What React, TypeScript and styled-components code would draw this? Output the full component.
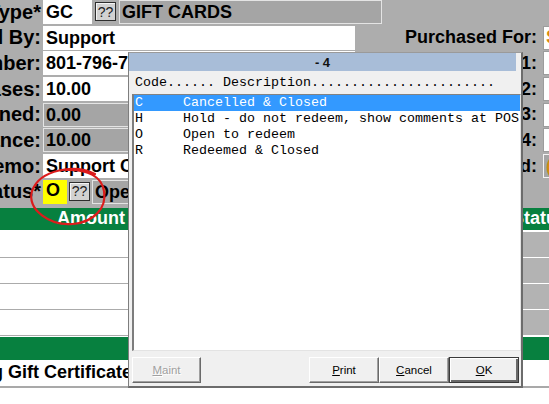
import React from "react";
import styled, { createGlobalStyle } from "styled-components";

const GlobalStyle = createGlobalStyle`
  html, body {
    margin: 0;
    padding: 0;
    background: #fff;
    overflow: hidden;
  }
  body {
    font-family: "Liberation Sans", Arial, sans-serif;
  }
`;

const Screen = styled.div`
  position: relative;
  width: 549px;
  height: 404px;
  overflow: hidden;
  background: #fff;
`;

const Form = styled.div`
  width: 620px;
  background: #adadad;
  display: grid;
  grid-template-columns: 41px 341px 161px 77px;
  grid-auto-rows: 24px;
  row-gap: 1.7px;
  padding-bottom: 4px;
`;

const Label = styled.div`
  display: flex;
  justify-content: flex-end;
  align-items: center;
  white-space: nowrap;
  font-weight: bold;
  font-size: 20px;
  color: #000;
`;

const SideLabel = styled(Label)`
  font-size: 18px;
  padding-right: 6px;
`;

const Cell = styled.div<{ $gap?: number }>`
  display: flex;
  gap: ${(p) => p.$gap ?? 3}px;
  padding-left: 2px;
  min-width: 0;
`;

type Tone = "white" | "gray" | "yellow";

const toneBg: Record<Tone, string> = {
  white: "#ffffff",
  gray: "#a5a5a5",
  yellow: "#ffff00",
};

const Field = styled.div<{ $w: number; $tone?: Tone; $top?: boolean }>`
  width: ${(p) => p.$w}px;
  flex: none;
  box-sizing: border-box;
  background: ${(p) => toneBg[p.$tone ?? "white"]};
  border: 1px solid ${(p) => (p.$tone === "gray" ? "#e4e4e4" : toneBg[p.$tone ?? "white"])};
  padding-left: 2px;
  display: flex;
  align-items: ${(p) => (p.$top ? "flex-start" : "center")};
  line-height: 18px;
  font-weight: bold;
  font-size: 18px;
  color: #000;
  white-space: nowrap;
  overflow: hidden;
`;

const SideField = styled.div<{ $tone?: Tone }>`
  box-sizing: border-box;
  height: 24px;
  background: ${(p) => toneBg[p.$tone ?? "white"]};
  border: 1px solid ${(p) => (p.$tone === "gray" ? "#f4f4f4" : "#9c9c9c")};
  padding-left: 2px;
  display: flex;
  align-items: center;
  font-weight: bold;
  font-size: 18px;
  color: #d68a10;
  overflow: hidden;
`;

const Lookup = styled.div`
  flex: none;
  width: 21px;
  height: 19px;
  margin-top: 2px;
  box-sizing: border-box;
  background: #d2d2d2;
  border: 1px solid #2e2e2e;
  box-shadow: inset 1px 1px 0 #f4f4f4;
  display: flex;
  align-items: center;
  justify-content: center;
  font-size: 14px;
  color: #202020;
`;

const Empty = styled.div``;

const Table = styled.div`
  width: 620px;
  display: grid;
  grid-template-columns: 127px 385px 1fr;
`;

const HeadCell = styled.div<{ $right?: boolean }>`
  height: 22px;
  margin-bottom: 2px;
  background: #07803f;
  color: #fff;
  font-weight: bold;
  font-size: 18px;
  display: flex;
  align-items: center;
  justify-content: ${(p) => (p.$right ? "flex-end" : "flex-start")};
  padding-right: ${(p) => (p.$right ? 2 : 0)}px;
  white-space: nowrap;
`;

const DataCell = styled.div<{ $status?: boolean }>`
  height: 25px;
  background: ${(p) => (p.$status ? "#b3b3b3" : "#fff")};
  border-bottom: 1px solid ${(p) => (p.$status ? "#fff" : "#ababab")};
`;

const TotalsBar = styled.div`
  grid-column: 1 / -1;
  height: 23px;
  margin-top: 1px;
  background: #07803f;
`;

const TotalsRow = styled.div`
  grid-column: 1 / -1;
  height: 26px;
  border-bottom: 2px solid #a9a9a9;
  display: flex;
  align-items: center;
  font-weight: bold;
  font-size: 18px;
  color: #000;
  white-space: nowrap;
  span {
    margin-left: -103px;
  }
`;

const Dialog = styled.div`
  position: absolute;
  left: 128px;
  top: 52px;
  width: 395px;
  height: 336px;
  box-sizing: border-box;
  background: #f0f0f0;
  border-style: solid;
  border-width: 1px 2px 2px 1px;
  border-color: #9a9a9a #6c6c6c #6c6c6c #7e7e7e;
  display: flex;
  flex-direction: column;
`;

const TitleBar = styled.div`
  height: 18px;
  margin-right: 5px;
  background: #a8bdd8;
  display: flex;
  align-items: center;
  justify-content: center;
  font-weight: bold;
  font-size: 13px;
  color: #111;
  white-space: pre;
`;

const ColumnHead = styled.div`
  height: 23px;
  padding-left: 6px;
  display: flex;
  align-items: center;
  font-family: "Liberation Mono", "Courier New", monospace;
  font-size: 13.33px;
  color: #000;
  white-space: pre;
`;

const ListBox = styled.div`
  height: 257px;
  margin-left: 3px;
  box-sizing: border-box;
  background: #fff;
  border-style: solid;
  border-width: 1px 1px 1px 2px;
  border-color: #828282 #e3e3e3 #e3e3e3 #7d7d7d;
`;

const Item = styled.div<{ $selected?: boolean }>`
  height: 16px;
  line-height: 16px;
  padding-left: 1px;
  font-family: "Liberation Mono", "Courier New", monospace;
  font-size: 13.33px;
  white-space: pre;
  background: ${(p) => (p.$selected ? "#3399ff" : "transparent")};
  color: ${(p) => (p.$selected ? "#fff" : "#000")};
`;

const ButtonRow = styled.div`
  display: flex;
  padding: 6px 2px 0 3px;
`;

const Spacer = styled.div`
  flex: 1;
`;

const DlgButton = styled.div<{ $w?: number; $default?: boolean; $disabled?: boolean }>`
  width: ${(p) => p.$w ?? 70}px;
  height: 26px;
  box-sizing: border-box;
  background: #f0f0f0;
  border: 1px solid;
  border-color: ${(p) => (p.$default ? "#3a3a3a" : "#fff #6a6a6a #6a6a6a #fff")};
  box-shadow: ${(p) =>
    p.$default
      ? "inset 1px 1px 0 #fff, inset -2px -2px 0 #6a6a6a"
      : "inset -1px -1px 0 #a0a0a0"};
  display: flex;
  align-items: center;
  justify-content: center;
  font-size: 11.5px;
  color: ${(p) => (p.$disabled ? "#a0a0a0" : "#000")};
  text-shadow: ${(p) => (p.$disabled ? "1px 1px 0 #fff" : "none")};
`;

const Mark = styled.svg`
  position: absolute;
  left: 0;
  top: 160px;
  pointer-events: none;
`;

const items = [
  ["C", "Cancelled & Closed"],
  ["H", "Hold - do not redeem, show comments at POS"],
  ["O", "Open to redeem"],
  ["R", "Redeemed & Closed"],
];

const App = () => {
  return (
    <Screen>
      <GlobalStyle />
      <Form>
        <Label>Card Type*</Label>
        <Cell>
          <Field $w={49}>GC</Field>
          <Lookup>??</Lookup>
          <Field $w={263} $tone="gray">GIFT CARDS</Field>
        </Cell>
        <Empty />
        <Empty />

        <Label>Sell By:</Label>
        <Cell>
          <Field $w={312}>Support</Field>
        </Cell>
        <SideLabel>Purchased For:</SideLabel>
        <SideField>S</SideField>

        <Label>Card Number:</Label>
        <Cell>
          <Field $w={312}>801-796-7000</Field>
        </Cell>
        <SideLabel>Address 1:</SideLabel>
        <SideField />

        <Label>Purchases:</Label>
        <Cell>
          <Field $w={120}>10.00</Field>
        </Cell>
        <SideLabel>Address 2:</SideLabel>
        <SideField />

        <Label>Returned:</Label>
        <Cell>
          <Field $w={120} $tone="gray">0.00</Field>
        </Cell>
        <SideLabel>Address 3:</SideLabel>
        <SideField />

        <Label>Balance:</Label>
        <Cell>
          <Field $w={120} $tone="gray">10.00</Field>
        </Cell>
        <SideLabel>Address 4:</SideLabel>
        <SideField />

        <Label>Memo:</Label>
        <Cell>
          <Field $w={312}>Support Card Sale</Field>
        </Cell>
        <SideLabel>Emailed:</SideLabel>
        <SideField $tone="gray">(</SideField>

        <Label>Status*</Label>
        <Cell $gap={2}>
          <Field $w={24} $tone="yellow" $top>O</Field>
          <Lookup>??</Lookup>
          <Field $w={220} $tone="gray">Open</Field>
        </Cell>
        <Empty />
        <Empty />
      </Form>

      <Table>
        <HeadCell $right>Amount</HeadCell>
        <HeadCell />
        <HeadCell>Status</HeadCell>
        {[0, 1, 2, 3].map((i) => (
          <React.Fragment key={i}>
            <DataCell />
            <DataCell />
            <DataCell $status />
          </React.Fragment>
        ))}
        <TotalsBar />
        <TotalsRow>
          <span>Outstanding Gift Certificates</span>
        </TotalsRow>
      </Table>

      <Mark width="120" height="80" viewBox="0 0 120 80">
        <path
          d="M 95 14 C 75 4, 40 9, 32 31 C 27 50, 50 66, 73 64 C 94 62, 107 48, 104 31 C 102 17, 88 9, 66 10"
          fill="none"
          stroke="#dc1c1c"
          strokeWidth="2.2"
          strokeLinecap="round"
        />
      </Mark>

      <Dialog>
        <TitleBar>- 4</TitleBar>
        <ColumnHead>Code...... Description.......................</ColumnHead>
        <ListBox>
          {items.map(([code, desc], i) => (
            <Item key={code} $selected={i === 0}>
              {code + "     " + desc}
            </Item>
          ))}
        </ListBox>
        <ButtonRow>
          <DlgButton $w={69} $disabled>
            <span>
              <u>M</u>aint
            </span>
          </DlgButton>
          <Spacer />
          <DlgButton>
            <span>
              <u>P</u>rint
            </span>
          </DlgButton>
          <DlgButton>
            <span>
              <u>C</u>ancel
            </span>
          </DlgButton>
          <DlgButton $default>
            <span>
              <u>O</u>K
            </span>
          </DlgButton>
        </ButtonRow>
      </Dialog>
    </Screen>
  );
};

export default App;
